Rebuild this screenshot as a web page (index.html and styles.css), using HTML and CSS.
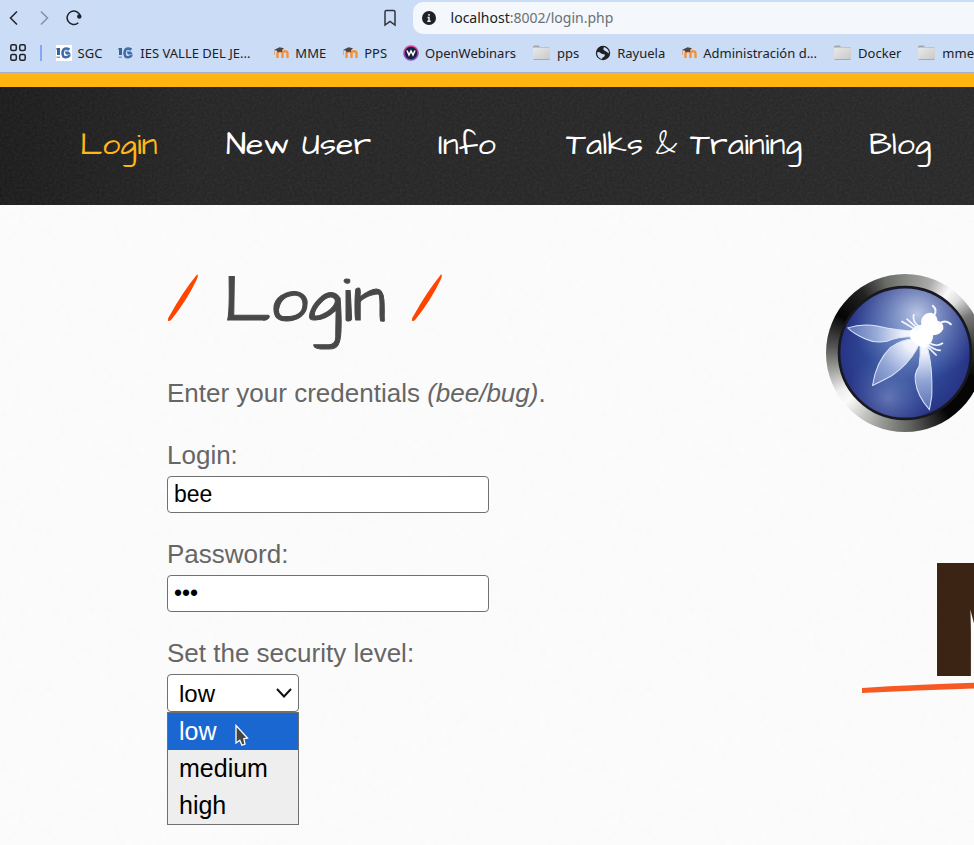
FILE: index.html
```html
<!DOCTYPE html>
<html lang="en">
<head>
<meta charset="utf-8">
<title>bWAPP - Login</title>
<link rel="stylesheet" href="styles.css">
</head>
<body>
<svg class="defs" aria-hidden="true">
  <defs>
    <symbol id="moodle" viewBox="0 0 16 16">
      <path d="M4.500 13V8.500Q4.500 6.300 7 6.300T9.500 8.500V13M9.500 8.500Q9.500 6.300 12 6.300T14.500 8.500V13" fill="none" stroke="#f5913a" stroke-width="2.400"/>
      <path d="M1 5 6.500 2.300 11 3.300 9 5.300 9.200 7.300 Q7 6.300 4.700 7.600L4 5.800Z" fill="#4a4744"/>
      <path d="M1.500 5.500V10" stroke="#d9a78a" stroke-width="1"/>
    </symbol>
    <symbol id="ies" viewBox="0 0 16 16">
      <path d="M0.500 3H4V10H1V5H0.500Z" fill="#3c6397"/>
      <path d="M0.500 11.500H4V13H0.500Z" fill="#7aa0cc"/>
      <path d="M13.500 4.500Q7 1.500 6.500 8 6.600 12.500 10 12.300 13.600 12 13.300 9.300 12.600 7 9.300 8" fill="none" stroke="#3f6ba6" stroke-width="2.600"/>
      <path d="M8 6H13M10 9.500H15" stroke="#86a9d2" stroke-width="1"/>
    </symbol>
    <symbol id="folder" viewBox="0 0 18 16">
      <path d="M0.500 2Q.5 .5 2 .5H6Q7 .5 7.300 2H16Q17 2 17 3V8H.5Z" fill="#a5a5a5"/>
      <rect x=".5" y="2.500" width="17" height="12" rx="1" fill="url(#folderFill)"/>
      <path d="M1 14.500H17" stroke="#aaa"/>
    </symbol>
    <linearGradient id="folderFill" x2="1" y2="1"><stop stop-color="#e9e9e9"/><stop offset="1" stop-color="#c9c9c9"/></linearGradient>
    <linearGradient id="ring" x2="0" y2="1"><stop stop-color="#e0428c"/><stop offset="1" stop-color="#7b4bd0"/></linearGradient>
  </defs>
</svg>

<div class="browser">
  <div class="toolbar">
    <div class="tools">
      <button aria-label="Back"><svg width="16" height="16" viewBox="0 0 16 16"><path d="M11 1.500 4.500 8 11 14.500" fill="none" stroke="#1f2226" stroke-width="1.500"/></svg></button>
      <button aria-label="Forward"><svg width="16" height="16" viewBox="0 0 16 16"><path d="M5 1.500 11.500 8 5 14.500" fill="none" stroke="#858fa2" stroke-width="1.500"/></svg></button>
      <button aria-label="Reload"><svg width="16" height="16" viewBox="0 0 16 16"><path d="M12.300 12.800A6.700 6.700 0 1 1 14.300 6" fill="none" stroke="#1f2226" stroke-width="1.500"/><circle cx="13.300" cy="6.500" r="2.200" fill="#1f2226"/></svg></button>
    </div>
    <button aria-label="Bookmark this page"><svg width="16" height="18" viewBox="0 0 16 18"><path d="M3 3Q3 1.500 4.500 1.500H11.500Q13 1.500 13 3V16L8 12.500 3 16Z" fill="none" stroke="#30343b" stroke-width="1.500"/></svg></button>
    <div class="address">
      <svg width="14" height="14" viewBox="0 0 14 14"><circle cx="7" cy="7" r="7" fill="#202124"/><path d="M7 3V4.800M5.500 6.500H7V10.500M5.300 10.300H8.700" stroke="#e8edf5" stroke-width="1.500" fill="none"/></svg>
      <span class="url"><span class="host">localhost</span>:8002/login.php</span>
    </div>
  </div>
  <nav class="bookmarks" aria-label="Bookmarks">
    <button aria-label="Apps"><svg width="16" height="17" viewBox="0 0 16 17" fill="none" stroke="#1f2226" stroke-width="1.500"><rect x=".8" y=".8" width="5.500" height="5.700" rx="1.500"/><rect x="9.700" y=".8" width="5.500" height="5.700" rx="1.500"/><rect x=".8" y="10.500" width="5.500" height="5.700" rx="1.500"/><rect x="9.700" y="10.500" width="5.500" height="5.700" rx="1.500"/></svg></button>
    <span class="divider"></span>
    <a href="#"><svg class="white" width="16" height="16"><use href="#ies"/></svg>SGC</a>
    <a class="long" href="#"><svg width="16" height="16"><use href="#ies"/></svg>IES VALLE DEL JE...</a>
    <a href="#"><svg width="16" height="16"><use href="#moodle"/></svg>MME</a>
    <a href="#"><svg width="16" height="16"><use href="#moodle"/></svg>PPS</a>
    <a href="#"><svg width="16" height="16" viewBox="0 0 16 16"><circle cx="8" cy="8" r="7" fill="#16213f" stroke="url(#ring)" stroke-width="1.600"/><path d="M4 5.500 6 10 8 6 10 10 12 5.500" fill="none" stroke="#fff" stroke-width="1.600"/></svg>OpenWebinars</a>
    <a href="#"><svg width="19" height="16"><use href="#folder"/></svg>pps</a>
    <a href="#"><svg width="16" height="16" viewBox="0 0 16 16"><circle cx="8" cy="8" r="7.200" fill="#202124"/><path d="M2 7.500Q4 6.500 5.500 8T9.500 9Q10.500 11.500 7.500 12.500L7 14.200Q2.300 13 2 7.500ZM9 2Q7.500 4.500 9.500 5.500T13.800 8.500Q14.500 4 9 2Z" fill="#cbdcf6"/></svg>Rayuela</a>
    <a href="#"><svg width="16" height="16"><use href="#moodle"/></svg>Administración d...</a>
    <a href="#"><svg width="19" height="16"><use href="#folder"/></svg>Docker</a>
    <a href="#"><svg width="19" height="16"><use href="#folder"/></svg>mme</a>
  </nav>
</div>

<header class="site-header">
  <nav class="menu" aria-label="Main">
    <a class="current" href="#">Login</a>
    <a class="strong" href="#">New User</a>
    <a href="#">Info</a>
    <a href="#">Talks &amp; Training</a>
    <a href="#">Blog</a>
  </nav>
</header>

<main class="page">
  <section class="content">
    <h1>
      <svg width="32" height="48" viewBox="0 0 32 48"><path d="M30 .5Q32 .5 29.500 6 20 26 4.500 45.500 2 48 1 46.500 .5 44 3 41 15 19 30 .5Z" fill="#ff4500"/></svg>
      <span>Login</span>
      <svg width="32" height="48" viewBox="0 0 32 48"><path d="M30 .5Q32 .5 29.500 6 20 26 4.500 45.500 2 48 1 46.500 .5 44 3 41 15 19 30 .5Z" fill="#ff4500"/></svg>
    </h1>
    <p>Enter your credentials <i>(bee/bug)</i>.</p>
    <form>
      <div class="field">
        <label for="login">Login:</label>
        <input id="login" type="text" value="bee">
      </div>
      <div class="field">
        <label for="password">Password:</label>
        <input id="password" type="password" value="bug">
      </div>
      <div class="field">
        <label for="level">Set the security level:</label>
        <div class="picker">
          <select id="level"><option>low</option><option>medium</option><option>high</option></select>
          <svg class="chevron" width="18" height="12" viewBox="0 0 18 12"><path d="M2 2 9 9.500 16 2" fill="none" stroke="#111" stroke-width="2"/></svg>
          <ul class="options" role="listbox" aria-label="Security level">
            <li role="option" aria-selected="true">low</li>
            <li role="option">medium</li>
            <li role="option">high</li>
          </ul>
          <svg class="cursor" width="16" height="23" viewBox="0 0 16 23"><path d="M2 1.500 13.500 14 9.800 14.700 11 20.200 8 21.300 5.800 16.300 2 19Z" fill="#444" stroke="#fff" stroke-width="1.300"/></svg>
        </div>
      </div>
    </form>
  </section>
  <aside class="logos">
    <a class="wasp" href="#" aria-label="OWASP">
      <svg viewBox="38 40 472 472">
        <defs>
          <radialGradient id="blue" cx="274" cy="276" r="197" gradientUnits="userSpaceOnUse"><stop stop-color="#4864aa"/><stop offset=".55" stop-color="#304a98"/><stop offset="1" stop-color="#273385"/></radialGradient>
          <radialGradient id="shine" cx="310" cy="160" r="200" gradientUnits="userSpaceOnUse"><stop stop-color="#dce6f7" stop-opacity=".8"/><stop offset="1" stop-color="#8ea8dc" stop-opacity="0"/></radialGradient>
          <radialGradient id="glow" cx="225" cy="410" r="130" gradientUnits="userSpaceOnUse"><stop stop-color="#a6b5dc" stop-opacity=".45"/><stop offset="1" stop-color="#6f88c5" stop-opacity="0"/></radialGradient>
          <radialGradient id="wing" cx="325" cy="220" r="230" gradientUnits="userSpaceOnUse"><stop stop-color="#fff"/><stop offset=".25" stop-color="#eef2fc"/><stop offset=".6" stop-color="#a4b5e0" stop-opacity=".85"/><stop offset="1" stop-color="#6f86c4" stop-opacity=".7"/></radialGradient>
        </defs>
        <circle cx="274" cy="276" r="197" fill="url(#blue)" stroke="#17191f" stroke-width="8"/>
        <circle cx="274" cy="276" r="193" fill="url(#shine)"/>
        <circle cx="274" cy="276" r="193" fill="url(#glow)"/>
        <g fill="url(#wing)" stroke="#dce4f7" stroke-width="3">
          <path d="M103 201Q145 187 195 196 250 209 307 210L310 228Q255 226 220 241 185 248 158 235 122 220 103 201Z"/>
          <path d="M177 373Q188 301 230 260 266 232 307 234 321 246 309 265 282 312 234 344 205 360 177 373Z"/>
          <path d="M319 249 339 253Q357 310 354 405L347 445Q310 404 305 360 301 338 316 316 321 283 319 249Z"/>
        </g>
        <g fill="#fff" stroke="#fff" stroke-width="5" stroke-linejoin="round">
          <path d="M292 211Q309 192 330 194L354 216Q359 234 345 249L330 258Q304 251 292 231Z"/>
          <path d="M326 175Q334 157 352 158 368 164 369 181 389 187 386 204 376 222 354 220L335 212 330 202Q322 190 326 175Z"/>
        </g>
        <g fill="none" stroke="#f4f7ff" stroke-width="6" stroke-linecap="round">
          <path d="M360 166Q372 148 357 135M377 188Q395 175 411 190"/>
          <path d="M307 207 265 182M312 203 280 175M320 200Q294 184 300 162M346 246Q370 259 386 247M342 251Q362 268 379 268M338 254 367 282" stroke-width="5"/>
        </g>
      </svg>
    </a>
    <a class="brand" href="#">
      <span>M</span>
      <svg width="240" height="16" viewBox="0 0 240 16"><path d="M0 7Q110 0 240 0V5Q120 6 0 12Z" fill="#f65a22"/></svg>
    </a>
  </aside>
</main>
</body>
</html>
```
FILE: styles.css
```css
* { box-sizing: border-box; }

body {
  margin: 0;
  min-height: 100vh;
  overflow: hidden;
  background-color: #fcfcfc;
  background-image: url("data:image/svg+xml,%3Csvg xmlns='http://www.w3.org/2000/svg' width='300' height='300'%3E%3Cfilter id='n'%3E%3CfeTurbulence type='fractalNoise' baseFrequency='.15' numOctaves='3' stitchTiles='stitch'/%3E%3CfeColorMatrix type='saturate' values='0'/%3E%3C/filter%3E%3Crect width='300' height='300' filter='url(%23n)' opacity='.03'/%3E%3C/svg%3E");
  color: #666;
  font-family: "Liberation Sans", Arial, sans-serif;
  font-size: 26px;
}

svg { display: block; flex: none; }
.defs { position: absolute; width: 0; height: 0; }
a { color: inherit; text-decoration: none; }

/* Browser bar */
.browser {
  overflow: hidden;
  background: #cbdcf6;
  border-bottom: 1px solid #a3b2ca;
  color: #202124;
  font-family: "Noto Sans", sans-serif;
  font-size: 13px;
}
.browser button { padding: 0; border: 0; background: none; }
.toolbar { display: flex; align-items: center; height: 35px; padding-left: 6px; }
.tools { display: flex; gap: 14px; margin-right: auto; }
.address {
  display: flex;
  align-items: center;
  gap: 15px;
  width: 58%;
  height: 32px;
  margin-left: 15px;
  padding-left: 9px;
  border-radius: 10px 0 0 10px;
  background: #f4f7fc;
}
.url { color: #6a7077; font-size: 14px; }
.host { color: #202124; }
.bookmarks {
  display: flex;
  align-items: center;
  gap: 16px;
  height: 37px;
  padding: 0 0 2px 10px;
  white-space: nowrap;
}
.bookmarks a { display: flex; align-items: center; gap: 6px; }
.bookmarks .long { min-width: 139px; }
.divider { width: 2px; height: 16px; margin: 0 -2px; background: #82aaf0; }
.white { background: #fff; }

/* Site header */
.site-header {
  border-top: 14px solid #ffb40f;
  background-color: #262626;
  background-image: url("data:image/svg+xml,%3Csvg xmlns='http://www.w3.org/2000/svg' width='300' height='300'%3E%3Cfilter id='n'%3E%3CfeTurbulence type='fractalNoise' baseFrequency='.4' numOctaves='3' stitchTiles='stitch'/%3E%3CfeColorMatrix type='saturate' values='0'/%3E%3C/filter%3E%3Crect width='300' height='300' filter='url(%23n)' opacity='.1'/%3E%3C/svg%3E"), linear-gradient(90deg, #181818, #222 20%, #252525);
}
.menu {
  display: grid;
  grid-template-columns: 146px 212px 128px 303px auto;
  padding: 38px 0 40px 80px;
  color: #fff;
  font-family: "Architects Daughter", Lato, sans-serif;
  font-size: 32px;
  line-height: 40px;
  white-space: nowrap;
}
.current { color: #ffb717; }
.strong { font-weight: 500; }

/* Page */
.page {
  display: flex;
  justify-content: space-between;
  overflow: hidden;
  padding: 69px 0 160px 167px;
}
h1 {
  display: flex;
  align-items: flex-start;
  gap: 25px;
  height: 80px;
  margin: 0 0 23px;
  color: #484848;
  font-family: "Architects Daughter", Lato, sans-serif;
  font-size: 67px;
  font-weight: 400;
  line-height: 80px;
  -webkit-text-stroke: 1px #484848;
}
h1 span { margin-top: -12px; }
p { margin: 0 0 31px; line-height: 32px; }
.field { margin-bottom: 26px; }
label { display: block; margin-bottom: 6px; line-height: 30px; }
input, select {
  display: block;
  height: 37px;
  border: 1px solid #707070;
  border-radius: 4px;
  background: #fff;
  color: #000;
  font: 24px "Liberation Sans", Arial, sans-serif;
}
input { width: 322px; padding: 0 6px; font-size: 23px; }
.picker { position: relative; width: 132px; color: #000; font-size: 25px; }
select { width: 100%; height: 38px; padding: 0 11px; appearance: none; }
.chevron { position: absolute; top: 13px; right: 6px; pointer-events: none; }
.options {
  position: absolute;
  top: 100%;
  left: 0;
  width: 100%;
  margin: 0;
  padding: 0;
  border: 1px solid #707070;
  background: #eee;
  list-style: none;
  line-height: 37px;
}
.options li { padding-left: 11px; }
.options [aria-selected] { background: #1a67d2; color: #fff; }
.cursor { position: absolute; top: 50px; left: 67px; }

/* Logos */
.logos { width: 148px; flex: none; }
.wasp {
  display: block;
  width: 158px;
  border-radius: 50%;
  background: conic-gradient(#858782, #aaa 20deg, #fafafa 35deg, #ddd 45deg, #777 60deg, #333 85deg, #060606 110deg, #050505 145deg, #5e605c 175deg, #9c9e99 200deg, #fafafa 230deg, #eee 240deg, #9b9d98 258deg, #555 275deg, #050505 300deg, #222 325deg, #696b66 345deg, #858782);
}
.brand { display: block; margin: 112px 0 0 36px; }
.brand span {
  display: block;
  height: 137px;
  padding-left: 70px;
  color: #3c2415;
  font: 900 150px/152px Inter, sans-serif;
  -webkit-text-stroke: 4px #3c2415;
}
```
